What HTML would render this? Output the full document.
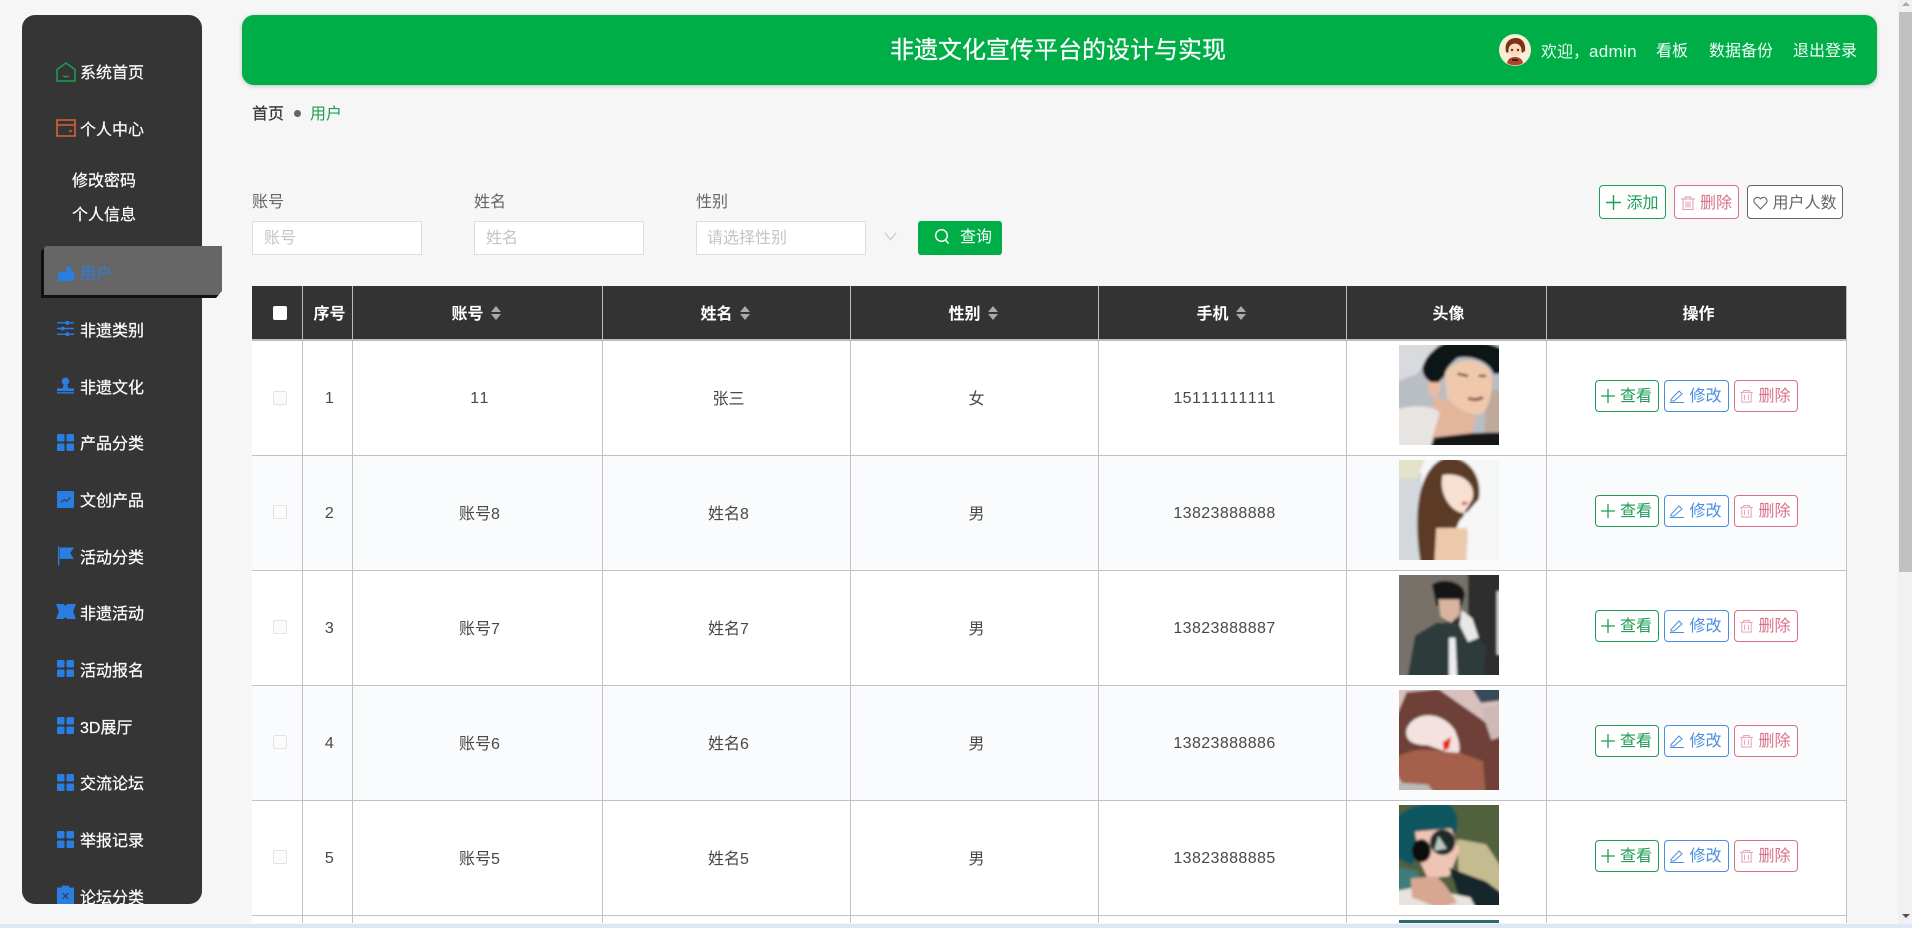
<!DOCTYPE html>
<html lang="zh"><head><meta charset="utf-8"><title>用户</title>
<style>
*{box-sizing:border-box}
html,body{margin:0;padding:0;width:1912px;height:928px;overflow:hidden;background:#f6f6f6;font-family:"Liberation Sans","Noto Sans CJK SC",sans-serif;font-size:16px;color:#555;font-kerning:none}
#w{position:relative;width:1912px;height:928px;overflow:hidden;background:#f6f6f6}
.abs{position:absolute}
#side{position:absolute;left:22px;top:15px;width:180px;height:889px;background:#353535;border-radius:13px;overflow:hidden}
.mi{position:absolute;left:57px;color:#fff;font-size:16px;line-height:24px;white-space:nowrap;display:block;-webkit-text-stroke:.2px #fff}
.mi svg{position:absolute;left:0;top:2px;width:17px;height:17px;overflow:visible;-webkit-text-stroke:0}
.mi span{margin-left:23px;position:relative;top:2px}
.t{position:absolute;white-space:nowrap}
#hdr{position:absolute;left:242px;top:15px;width:1635px;height:70px;background:#00ae47;border-radius:12px;box-shadow:0 1px 5px rgba(0,0,0,.22)}
.inp{position:absolute;top:221px;width:170px;height:34px;background:#fff;border:1px solid #dedede;color:#c4c4c4;line-height:34px;padding-left:11px;font-size:16px}
.btn{position:absolute;background:#fff;border:1px solid;border-radius:4px;font-size:16px;white-space:nowrap;text-align:center}
.btn svg{vertical-align:-2px;margin-right:5px}
.g{color:#1f9d55;border-color:#1f9d55}.b{color:#4a8ee0;border-color:#4a8ee0}.r{color:#d8708a;border-color:#d8708a}.k{color:#666;border-color:#666}
#tb{position:absolute;left:252px;top:286px;width:1594px;border-collapse:collapse;table-layout:fixed;background:#fff}
#tb th{background:#333;color:#fff;height:54px;font-size:16px;font-weight:700;border-right:1px solid #bbb;border-bottom:2px solid #bdbdbd;padding:0 0 2px 5px;text-align:center}
#tb th.s{padding:0 2px 2px 0}
#tb td{height:115px;border-right:1px solid #c2c2c2;border-bottom:1px solid #c2c2c2;text-align:center;padding:0 0 2px 5px;color:#484848;font-size:16px;position:relative;vertical-align:middle}
#tb tr:nth-child(even) td{background:#fafbfc}
#tb tr.e td{height:8px;line-height:0;font-size:0;padding:0;border-bottom:0;background:#fff;overflow:hidden}
.n{position:relative;top:2px;letter-spacing:.4px}
.cb{display:inline-block;width:14px;height:14px;border:1px solid #e2e2e2;border-radius:2px;background:#fbfbfb;vertical-align:middle;position:relative;top:1px;left:1px}
.so{display:inline-block;width:10px;height:14px;margin-left:7px;vertical-align:-1px}
.ph{position:absolute;left:52px;top:4px;width:100px;height:100px;display:block}
.bt{position:absolute;height:32px;line-height:31px;top:39px}
</style></head><body>
<div id="w">
<div id="side"></div>
<a class="mi" style="top:60px"><svg viewBox="0 0 20 20" style="left:-1px;top:2px;width:20px;height:20px"><path d="M1 7.500 10 1l9 6.500V19H1Z M7 14q3 1.500 6 0" fill="none" stroke="#1f9d55" stroke-width="1.500"/></svg><span>系统首页</span></a>
<a class="mi" style="top:117px"><svg viewBox="0 0 20 18" style="left:-1px;top:2px;width:20px;height:18px"><path d="M1 1h18v16H1Z M1 6h18 M13 12h3" fill="none" stroke="#d9623b" stroke-width="1.600"/></svg><span>个人中心</span></a>
<div class="t" style="left:72px;top:168px;color:#fff;line-height:24px;-webkit-text-stroke:.2px #fff;padding-top:2px">修改密码</div>
<div class="t" style="left:72px;top:202px;color:#fff;line-height:24px;-webkit-text-stroke:.2px #fff;padding-top:2px">个人信息</div>

<div class="abs" style="left:44px;top:246px;width:178px;height:49px;background:#666;box-shadow:-3px 3px 0 #111;clip-path:polygon(-4px 0,178px 0,178px 45px,172px 52px,-4px 52px);border-top-left-radius:3px"></div>
<a class="mi" style="top:261px;color:#2a7de1;-webkit-text-stroke:0"><svg viewBox="0 0 18 18" fill="#2a7de1" style="top:4px;width:18px;height:16px"><path d="M0 8 10 8 9 3 11 1 15 4V8H18V18H0Z"/></svg><span>用户</span></a>

<a class="mi" style="top:318px"><svg viewBox="0 0 18 18" stroke="#2a7de1" stroke-width="1.500" fill="#2a7de1"><path d="M0 3h18M0 9h18M0 15h18" fill="none"/><circle cx="11" cy="3" r="1.300"/><circle cx="6" cy="9" r="1.300"/><circle cx="11" cy="15" r="1.300"/></svg><span>非遗类别</span></a>
<a class="mi" style="top:375px"><svg viewBox="0 0 18 18" fill="#2a7de1"><circle cx="9" cy="4.500" r="4"/><path d="M7 8h4l1 4h6v3H0v-3h6ZM0 16h18v1.500H0Z"/></svg><span>非遗文化</span></a>
<a class="mi" style="top:431px"><svg viewBox="0 0 18 18" fill="#2a7de1" style="top:3px"><rect width="8" height="8" rx="1.500"/><rect x="10" width="8" height="8" rx="1.500"/><rect y="10" width="8" height="8" rx="1.500"/><rect x="10" y="10" width="8" height="8" rx="1.500"/></svg><span>产品分类</span></a>
<a class="mi" style="top:488px"><svg viewBox="0 0 18 18" style="top:3px"><rect width="18" height="18" rx="1" fill="#2a7de1"/><path d="M4 12 8 9l2 2 4-4" fill="none" stroke="#333" stroke-width="1"/></svg><span>文创产品</span></a>
<a class="mi" style="top:545px"><svg viewBox="0 0 18 20" style="height:20px;top:1px" fill="#2a7de1"><path d="M1 0h1.500v20H1ZM3 1h15l-4 6 4 6H3Z"/></svg><span>活动分类</span></a>
<a class="mi" style="top:601px"><svg viewBox="0 0 18 18" fill="#2a7de1"><path d="M-1 1H7L9 3 11 1H20L17 9 20 17H11L9 15 7 17H-1L2 9Z"/></svg><span>非遗活动</span></a>
<a class="mi" style="top:658px"><svg viewBox="0 0 18 18" fill="#2a7de1"><rect width="8" height="8" rx="1.500"/><rect x="10" width="8" height="8" rx="1.500"/><rect y="10" width="8" height="8" rx="1.500"/><rect x="10" y="10" width="8" height="8" rx="1.500"/></svg><span>活动报名</span></a>
<a class="mi" style="top:715px"><svg viewBox="0 0 18 18" fill="#2a7de1"><rect width="8" height="8" rx="1.500"/><rect x="10" width="8" height="8" rx="1.500"/><rect y="10" width="8" height="8" rx="1.500"/><rect x="10" y="10" width="8" height="8" rx="1.500"/></svg><span>3D展厅</span></a>
<a class="mi" style="top:771px"><svg viewBox="0 0 18 18" fill="#2a7de1" style="top:3px"><rect width="8" height="8" rx="1.500"/><rect x="10" width="8" height="8" rx="1.500"/><rect y="10" width="8" height="8" rx="1.500"/><rect x="10" y="10" width="8" height="8" rx="1.500"/></svg><span>交流论坛</span></a>
<a class="mi" style="top:828px"><svg viewBox="0 0 18 18" fill="#2a7de1" style="top:3px"><rect width="8" height="8" rx="1.500"/><rect x="10" width="8" height="8" rx="1.500"/><rect y="10" width="8" height="8" rx="1.500"/><rect x="10" y="10" width="8" height="8" rx="1.500"/></svg><span>举报记录</span></a>
<div class="abs" style="left:22px;top:840px;width:180px;height:64px;overflow:hidden;border-radius:0 0 13px 13px;pointer-events:none">
<a class="mi" style="top:45px;left:35px;height:19px;overflow:hidden;width:120px"><svg viewBox="0 0 18 21" style="height:21px;top:0" fill="#2a7de1"><path d="M5 0h8v2h5v19H0V2h5Z"/><path d="M6 8l6 6M12 8l-6 6" stroke="#333" stroke-width="1"/></svg><span>论坛分类</span></a>
</div>

<div id="hdr"></div>
<div class="t" style="left:890px;top:33px;font-size:24px;line-height:36px;color:#fff;-webkit-text-stroke:.2px #fff">非遗文化宣传平台的设计与实现</div>
<svg class="abs" style="left:1499px;top:34px" width="32" height="32" viewBox="0 0 32 32"><circle cx="16" cy="16" r="16" fill="#f7eed6"/><path d="M7 18C5 8 11 4 17 4s10 5 9 13l-3 2-2-7-7-2-4 6-1 3Z" fill="#7a3216"/><ellipse cx="16" cy="16" rx="6.500" ry="6.500" fill="#fbd9bd"/><circle cx="13" cy="16" r="1.200" fill="#6a2a12"/><circle cx="19" cy="16" r="1.200" fill="#6a2a12"/><path d="M8 29c1-5 5-6 8-6s7 1 8 6c-4 3-12 3-16 0Z" fill="#b8402a"/><path d="M13 25h6v2h-6Z" fill="#2a2a2a"/></svg>
<div class="t" style="left:1541px;top:40px;line-height:24px;color:#e4fff0">欢迎，<span style="font-size:17px;letter-spacing:.3px">admin</span></div>
<div class="t" style="left:1656px;top:40px;line-height:24px;color:#f2fff8">看板</div>
<div class="t" style="left:1709px;top:40px;line-height:24px;color:#f2fff8">数据备份</div>
<div class="t" style="left:1793px;top:40px;line-height:24px;color:#f2fff8">退出登录</div>

<div class="t" style="left:252px;top:103px;line-height:24px;color:#333;-webkit-text-stroke:.2px #333">首页</div>
<div class="abs" style="left:294px;top:110px;width:7px;height:7px;border-radius:50%;background:#666"></div>
<div class="t" style="left:310px;top:103px;line-height:24px;color:#1f9d55">用户</div>

<div class="t" style="left:252px;top:191px;line-height:24px;color:#666">账号</div>
<div class="t" style="left:474px;top:191px;line-height:24px;color:#666">姓名</div>
<div class="t" style="left:696px;top:191px;line-height:24px;color:#666">性别</div>
<div class="inp" style="left:252px">账号</div>
<div class="inp" style="left:474px">姓名</div>
<div class="inp" style="left:696px;padding-left:10px">请选择性别</div>
<svg class="abs" style="left:884px;top:232px" width="13" height="9" viewBox="0 0 13 9"><path d="M1 1l5.500 6.500L12 1" fill="none" stroke="#c8c8c8" stroke-width="1.200"/></svg>
<div class="abs" style="left:918px;top:221px;width:84px;height:34px;background:#00ae47;border-radius:3px;color:#fff;line-height:34px;padding-left:16px;white-space:nowrap"><svg width="17" height="17" viewBox="0 0 17 17" style="vertical-align:-3px;margin-right:9px"><circle cx="7.500" cy="7.500" r="5.800" fill="none" stroke="#fff" stroke-width="1.400"/><path d="M11.500 12l3 3.500" stroke="#fff" stroke-width="1.400"/></svg>查询</div>

<div class="btn g" style="left:1599px;top:185px;width:67px;height:34px;line-height:35px"><svg width="15" height="15" viewBox="0 0 15 15"><path d="M7.500 0v15M0 7.500h15" stroke="#1f9d55" stroke-width="1.400"/></svg>添加</div>
<div class="btn r" style="left:1674px;top:185px;width:65px;height:34px;line-height:35px"><svg width="14" height="14" viewBox="0 0 14 14" fill="none" stroke="#e39aac" stroke-width="1"><path d="M0 3h14M4 3V1h6v2M2 3v10.500h10V3M5 5.500v6M7 5.500v6M9 5.500v6"/></svg>删除</div>
<div class="btn k" style="left:1747px;top:185px;width:96px;height:34px;line-height:35px"><svg width="15" height="14" viewBox="0 0 15 14" style="margin-right:4px"><path d="M7.500 13 1.500 6.800C-.5 3.500 3.500-.8 7.500 2.800 11.500-.8 15.500 3.500 13.500 6.800Z" fill="none" stroke="#666" stroke-width="1.100"/></svg>用户人数</div>

<table id="tb">
<colgroup><col style="width:50px"><col style="width:50px"><col style="width:250px"><col style="width:248px"><col style="width:248px"><col style="width:248px"><col style="width:200px"><col style="width:300px"></colgroup>
<thead><tr>
<th><span style="display:inline-block;width:14px;height:14px;background:#fff;border-radius:2px;vertical-align:middle;position:relative;top:2px;left:1px"></span></th>
<th>序号</th>
<th class="s">账号<svg class="so" viewBox="0 0 10 14"><path d="M5 0l5 6H0ZM5 14 0 8h10Z" fill="#aaa"/></svg></th>
<th class="s">姓名<svg class="so" viewBox="0 0 10 14"><path d="M5 0l5 6H0ZM5 14 0 8h10Z" fill="#aaa"/></svg></th>
<th class="s">性别<svg class="so" viewBox="0 0 10 14"><path d="M5 0l5 6H0ZM5 14 0 8h10Z" fill="#aaa"/></svg></th>
<th class="s">手机<svg class="so" viewBox="0 0 10 14"><path d="M5 0l5 6H0ZM5 14 0 8h10Z" fill="#aaa"/></svg></th>
<th>头像</th><th>操作</th>
</tr></thead>
<tbody>
<tr><td><span class="cb"></span></td><td><span class="n">1</span></td><td><span class="n">11</span></td><td>张三</td><td>女</td><td><span class="n">15111111111</span></td>
<td><svg class="ph" viewBox="0 0 100 100" preserveAspectRatio="none"><defs><filter id="f"><feGaussianBlur stdDeviation="1.200"/></filter></defs><rect width="100" height="100" fill="#b9bdc4"/><g filter="url(#f)" transform="translate(-3 -3) scale(1.060)"><rect x="-5" y="-5" width="110" height="110" fill="#b9bdc4"/><path d="M-5-5H45L20 30-5 40Z" fill="#d8dadd"/><path d="M84 45h21v45H84Z" fill="#bfa99b"/><path d="M36 50 62 62 75 70 72 88 40 105 32 80Z" fill="#e3b69c"/><path d="M46 30C55 15 80 12 90 30 92 45 88 62 81 68 70 70 55 62 48 52Z" fill="#f0c9ad"/><ellipse cx="36" cy="42" rx="6" ry="9" fill="#e8bba2"/><path d="M25 25C28 8 50-5 70-5L105 8 105 30 92 30C88 18 70 12 58 15 52 20 46 26 46 32L40 38 33 38C27 34 25 30 25 25Z" fill="#0f1418"/><path d="M31 105 36 90 72 86 105 85V105Z" fill="#151515"/><path d="M-5 65C15 58 40 60 41 68L30 105H-5Z" fill="#e7e4e2"/><path d="M68 53q8 3 14-1" stroke="#94525a" stroke-width="3" fill="none"/><path d="M58 30l10 2M78 32l7 0" stroke="#3a2a22" stroke-width="2"/></g></svg></td>
<td><a class="btn g bt" style="left:48px;width:64px"><svg width="14" height="14" viewBox="0 0 14 14"><path d="M7 0v14M0 7h14" stroke="#1f9d55" stroke-width="1.300"/></svg>查看</a><a class="btn b bt" style="left:117px;width:65px"><svg width="14" height="14" viewBox="0 0 14 14" fill="none" stroke="#4a8ee0"><path d="M1 10.500 9 2l3 3-8 7H1ZM0 13.500h14"/></svg>修改</a><a class="btn r bt" style="left:187px;width:64px"><svg width="13" height="14" viewBox="0 0 14 14" fill="none" stroke="#e39aac"><path d="M0 3h14M4 3V1h6v2M2 3v10.500h10V3M5 5.500v6M9 5.500v6"/></svg>删除</a></td></tr>

<tr><td><span class="cb"></span></td><td><span class="n">2</span></td><td>账号8</td><td>姓名8</td><td>男</td><td><span class="n">13823888888</span></td>
<td><svg class="ph" viewBox="0 0 100 100" preserveAspectRatio="none"><rect width="100" height="100" fill="#f5f6f6"/><g filter="url(#f)" transform="translate(-3 -3) scale(1.060)"><rect x="-5" y="-5" width="110" height="110" fill="#f5f6f6"/><path d="M-5 15H24V105H-5Z" fill="#d2d8dc"/><path d="M-5-5H30L20 20H-5Z" fill="#e4e2c9"/><path d="M24 105C16 60 18 10 48 0 70 0 82 20 78 40L60 60 40 105Z" fill="#5c3a26"/><path d="M44 17C62 14 76 25 72 40L64 53C52 52 40 35 44 17Z" fill="#f7e0d2"/><path d="M36 105 38 67 68 67 66 105Z" fill="#ecc9aa"/><path d="M64 53C78 48 98 55 98 70L91 93 69 80Z" fill="#f6f6f7"/><path d="M62 42l7 1-6 3Z" fill="#d8354d"/></g></svg></td>
<td><a class="btn g bt" style="left:48px;width:64px"><svg width="14" height="14" viewBox="0 0 14 14"><path d="M7 0v14M0 7h14" stroke="#1f9d55" stroke-width="1.300"/></svg>查看</a><a class="btn b bt" style="left:117px;width:65px"><svg width="14" height="14" viewBox="0 0 14 14" fill="none" stroke="#4a8ee0"><path d="M1 10.500 9 2l3 3-8 7H1ZM0 13.500h14"/></svg>修改</a><a class="btn r bt" style="left:187px;width:64px"><svg width="13" height="14" viewBox="0 0 14 14" fill="none" stroke="#e39aac"><path d="M0 3h14M4 3V1h6v2M2 3v10.500h10V3M5 5.500v6M9 5.500v6"/></svg>删除</a></td></tr>

<tr><td><span class="cb"></span></td><td><span class="n">3</span></td><td>账号7</td><td>姓名7</td><td>男</td><td><span class="n">13823888887</span></td>
<td><svg class="ph" viewBox="0 0 100 100" preserveAspectRatio="none"><rect width="100" height="100" fill="#2f2f2e"/><g filter="url(#f)" transform="translate(-3 -3) scale(1.060)"><rect x="-5" y="-5" width="110" height="110" fill="#2f2f2e"/><path d="M-5-5H68V40L40 50 20 105H-5Z" fill="#77716a"/><path d="M95 18h10v60h-10Z" fill="#d9d6d0"/><path d="M34 12C42 5 65 8 65 22L62 32H38Z" fill="#121316"/><path d="M40 26H60V40L52 48 42 42Z" fill="#d9b49e"/><path d="M10 105 18 60 38 48 60 48 85 70 82 105Z" fill="#2f3b3b"/><path d="M50 62h6l2 43h-8Z" fill="#ededed"/><path d="M62 36 72 44 78 62 68 66 60 50Z" fill="#e8e8e8"/></g></svg></td>
<td><a class="btn g bt" style="left:48px;width:64px"><svg width="14" height="14" viewBox="0 0 14 14"><path d="M7 0v14M0 7h14" stroke="#1f9d55" stroke-width="1.300"/></svg>查看</a><a class="btn b bt" style="left:117px;width:65px"><svg width="14" height="14" viewBox="0 0 14 14" fill="none" stroke="#4a8ee0"><path d="M1 10.500 9 2l3 3-8 7H1ZM0 13.500h14"/></svg>修改</a><a class="btn r bt" style="left:187px;width:64px"><svg width="13" height="14" viewBox="0 0 14 14" fill="none" stroke="#e39aac"><path d="M0 3h14M4 3V1h6v2M2 3v10.500h10V3M5 5.500v6M9 5.500v6"/></svg>删除</a></td></tr>

<tr><td><span class="cb"></span></td><td><span class="n">4</span></td><td>账号6</td><td>姓名6</td><td>男</td><td><span class="n">13823888886</span></td>
<td><svg class="ph" viewBox="0 0 100 100" preserveAspectRatio="none"><rect width="100" height="100" fill="#d8c0bd"/><g filter="url(#f)" transform="translate(-3 -3) scale(1.060)"><rect x="-5" y="-5" width="110" height="110" fill="#d8c0bd"/><path d="M-5 40 10 5 40 2 80 30 105 50V105H60L35 60 20 60 10 70H-5Z" fill="#6e3f38"/><path d="M10 40C15 25 40 20 55 40 62 55 60 62 58 65L30 55C15 55 8 50 10 40Z" fill="#f3e2e0"/><path d="M44 52 52 47 50 58 45 60Z" fill="#e8250c"/><path d="M-5 70C20 52 40 62 60 62L82 70 85 105H35L5 90Z" fill="#a4604c"/><path d="M-5 90 30 92 40 105H-5Z" fill="#bbbab6"/><path d="M80 20 105 15V45L90 50Z" fill="#ceb9b6"/><path d="M68-5 105-5V12L80 15Z" fill="#39495a"/></g></svg></td>
<td><a class="btn g bt" style="left:48px;width:64px"><svg width="14" height="14" viewBox="0 0 14 14"><path d="M7 0v14M0 7h14" stroke="#1f9d55" stroke-width="1.300"/></svg>查看</a><a class="btn b bt" style="left:117px;width:65px"><svg width="14" height="14" viewBox="0 0 14 14" fill="none" stroke="#4a8ee0"><path d="M1 10.500 9 2l3 3-8 7H1ZM0 13.500h14"/></svg>修改</a><a class="btn r bt" style="left:187px;width:64px"><svg width="13" height="14" viewBox="0 0 14 14" fill="none" stroke="#e39aac"><path d="M0 3h14M4 3V1h6v2M2 3v10.500h10V3M5 5.500v6M9 5.500v6"/></svg>删除</a></td></tr>

<tr><td><span class="cb"></span></td><td><span class="n">5</span></td><td>账号5</td><td>姓名5</td><td>男</td><td><span class="n">13823888885</span></td>
<td><svg class="ph" viewBox="0 0 100 100" preserveAspectRatio="none"><rect width="100" height="100" fill="#51613c"/><g filter="url(#f)" transform="translate(-3 -3) scale(1.060)"><rect x="-5" y="-5" width="110" height="110" fill="#51613c"/><path d="M58 35 85 40 105 70V105H60Z" fill="#c4bb90"/><path d="M-5 60 20 65 25 80-5 85Z" fill="#3e7d7a"/><path d="M-5 30C-5 5 30-2 50 2 60 10 60 25 55 30L30 28 15 60-5 50Z" fill="#0f5660"/><path d="M18 28 52 25 60 45 50 70 30 72 22 55Z" fill="#f0c4b4"/><ellipse cx="24" cy="46" rx="9" ry="11" fill="#111"/><ellipse cx="44" cy="38" rx="12" ry="12" fill="#1e2a2a"/><path d="M40 32 48 44 36 46Z" fill="#bcc7c0"/><path d="M50 62 85 75 105 90V105H65Z" fill="#16282a"/><path d="M-5 85 20 80 70 90 78 105H-5Z" fill="#e8e3dd"/><path d="M14 72 38 70 46 78 58 95 40 100 15 90Z" fill="#d7a792"/></g></svg></td>
<td><a class="btn g bt" style="left:48px;width:64px"><svg width="14" height="14" viewBox="0 0 14 14"><path d="M7 0v14M0 7h14" stroke="#1f9d55" stroke-width="1.300"/></svg>查看</a><a class="btn b bt" style="left:117px;width:65px"><svg width="14" height="14" viewBox="0 0 14 14" fill="none" stroke="#4a8ee0"><path d="M1 10.500 9 2l3 3-8 7H1ZM0 13.500h14"/></svg>修改</a><a class="btn r bt" style="left:187px;width:64px"><svg width="13" height="14" viewBox="0 0 14 14" fill="none" stroke="#e39aac"><path d="M0 3h14M4 3V1h6v2M2 3v10.500h10V3M5 5.500v6M9 5.500v6"/></svg>删除</a></td></tr>

<tr class="e"><td></td><td></td><td></td><td></td><td></td><td></td><td><span class="abs" style="left:52px;top:4px;width:100px;height:4px;background:#2d6a6c"></span></td><td></td></tr>
</tbody></table>

<div class="abs" style="left:1898px;top:0;width:14px;height:928px;background:#f1f1f1"></div>
<div class="abs" style="left:1899px;top:12px;width:13px;height:560px;background:#c0c0c0"></div>
<svg class="abs" style="left:1900px;top:0" width="12" height="8" viewBox="0 0 12 8"><path d="M6 2l4 4H2Z" fill="#a8a8a8"/></svg>
<svg class="abs" style="left:1900px;top:912px" width="12" height="8" viewBox="0 0 12 8"><path d="M6 6 2 2h8Z" fill="#505050"/></svg>
<div class="abs" style="left:0;top:924px;width:1912px;height:4px;background:#dde8f6"></div>
</div>
</body></html>
